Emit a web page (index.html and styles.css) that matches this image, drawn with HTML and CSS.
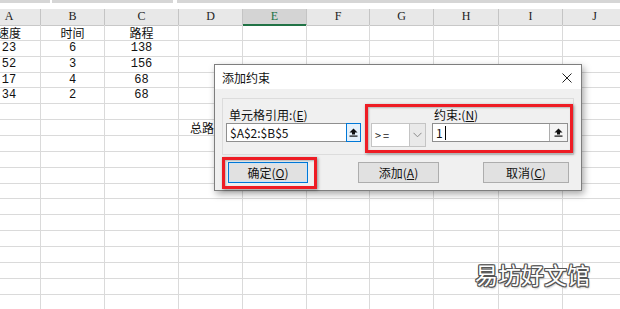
FILE: index.html
```html
<!DOCTYPE html>
<html>
<head>
    <title>添加约束</title>
    <link rel="stylesheet" href="styles.css">
</head>
<body>
    <div class="topbar">
        <span class="seg seg-name"></span>
        <span class="seg seg-fx"></span>
        <span class="seg seg-formula"></span>
    </div>
    <div class="sheet">
        <div class="row head">
            <div class="c">A</div><div class="c">B</div><div class="c">C</div><div class="c">D</div>
            <div class="c sel">E</div><div class="c">F</div><div class="c">G</div><div class="c">H</div>
            <div class="c">I</div><div class="c">J</div>
        </div>
        <div class="row"><div class="c cjk">速度</div><div class="c cjk">时间</div><div class="c cjk">路程</div><div class="c"></div><div class="c"></div><div class="c"></div><div class="c"></div><div class="c"></div><div class="c"></div><div class="c"></div></div>
        <div class="row"><div class="c">23</div><div class="c">6</div><div class="c">138</div><div class="c"></div><div class="c"></div><div class="c"></div><div class="c"></div><div class="c"></div><div class="c"></div><div class="c"></div></div>
        <div class="row"><div class="c">52</div><div class="c">3</div><div class="c">156</div><div class="c"></div><div class="c"></div><div class="c"></div><div class="c"></div><div class="c"></div><div class="c"></div><div class="c"></div></div>
        <div class="row short"><div class="c">17</div><div class="c">4</div><div class="c">68</div><div class="c"></div><div class="c"></div><div class="c"></div><div class="c"></div><div class="c"></div><div class="c"></div><div class="c"></div></div>
        <div class="row"><div class="c">34</div><div class="c">2</div><div class="c">68</div><div class="c"></div><div class="c"></div><div class="c"></div><div class="c"></div><div class="c"></div><div class="c"></div><div class="c"></div></div>
        <div class="row"><div class="c"></div><div class="c"></div><div class="c"></div><div class="c"></div><div class="c"></div><div class="c"></div><div class="c"></div><div class="c"></div><div class="c"></div><div class="c"></div></div>
        <div class="row"><div class="c"></div><div class="c"></div><div class="c"></div><div class="c cjk left">总路程</div><div class="c"></div><div class="c"></div><div class="c"></div><div class="c"></div><div class="c"></div><div class="c"></div></div>
        <div class="row"><div class="c"></div><div class="c"></div><div class="c"></div><div class="c"></div><div class="c"></div><div class="c"></div><div class="c"></div><div class="c"></div><div class="c"></div><div class="c"></div></div>
        <div class="row"><div class="c"></div><div class="c"></div><div class="c"></div><div class="c"></div><div class="c"></div><div class="c"></div><div class="c"></div><div class="c"></div><div class="c"></div><div class="c"></div></div>
        <div class="row"><div class="c"></div><div class="c"></div><div class="c"></div><div class="c"></div><div class="c"></div><div class="c"></div><div class="c"></div><div class="c"></div><div class="c"></div><div class="c"></div></div>
        <div class="row short"><div class="c"></div><div class="c"></div><div class="c"></div><div class="c"></div><div class="c"></div><div class="c"></div><div class="c"></div><div class="c"></div><div class="c"></div><div class="c"></div></div>
        <div class="row"><div class="c"></div><div class="c"></div><div class="c"></div><div class="c"></div><div class="c"></div><div class="c"></div><div class="c"></div><div class="c"></div><div class="c"></div><div class="c"></div></div>
        <div class="row"><div class="c"></div><div class="c"></div><div class="c"></div><div class="c"></div><div class="c"></div><div class="c"></div><div class="c"></div><div class="c"></div><div class="c"></div><div class="c"></div></div>
        <div class="row"><div class="c"></div><div class="c"></div><div class="c"></div><div class="c"></div><div class="c"></div><div class="c"></div><div class="c"></div><div class="c"></div><div class="c"></div><div class="c"></div></div>
        <div class="row"><div class="c"></div><div class="c"></div><div class="c"></div><div class="c"></div><div class="c"></div><div class="c"></div><div class="c"></div><div class="c"></div><div class="c"></div><div class="c"></div></div>
        <div class="row"><div class="c"></div><div class="c"></div><div class="c"></div><div class="c"></div><div class="c"></div><div class="c"></div><div class="c"></div><div class="c"></div><div class="c"></div><div class="c"></div></div>
        <div class="row"><div class="c"></div><div class="c"></div><div class="c"></div><div class="c"></div><div class="c"></div><div class="c"></div><div class="c"></div><div class="c"></div><div class="c"></div><div class="c"></div></div>
        <div class="row"><div class="c"></div><div class="c"></div><div class="c"></div><div class="c"></div><div class="c"></div><div class="c"></div><div class="c"></div><div class="c"></div><div class="c"></div><div class="c"></div></div>
    </div>

    <div class="dialog">
        <div class="titlebar">
            <span>添加约束</span>
            <svg class="close" width="10" height="10" viewBox="0 0 10 10">
                <path d="M0.5 0.5 L9.5 9.5 M9.5 0.5 L0.5 9.5" stroke="#222" stroke-width="1" fill="none"/>
            </svg>
        </div>
        <div class="dlg-body">
            <div class="group">
                <div class="field field-ref">
                    <div class="label">单元格引用:(<u>E</u>)</div>
                    <div class="input input-ref">
                        <span class="value">$A$2:$B$5</span>
                        <span class="pick focus">
                            <svg width="9" height="9" viewBox="0 0 9 9"><path d="M4.5 0.5 L8.5 4.5 H6 V6.5 H3 V4.5 H0.5 Z" fill="#111"/><rect x="0.5" y="7.5" width="8" height="1.2" fill="#111"/></svg>
                        </span>
                    </div>
                </div>
                <div class="combo">
                    <span class="value">&gt;=</span>
                    <span class="drop">
                        <svg width="9" height="6" viewBox="0 0 9 6"><path d="M0.5 0.8 L4.5 4.8 L8.5 0.8" stroke="#8a8a8a" stroke-width="1" fill="none"/></svg>
                    </span>
                </div>
                <div class="field field-val">
                    <div class="label">约束:(<u>N</u>)</div>
                    <div class="input input-val">
                        <span class="value">1<span class="caret"></span></span>
                        <span class="pick">
                            <svg width="9" height="9" viewBox="0 0 9 9"><path d="M4.5 0.5 L8.5 4.5 H6 V6.5 H3 V4.5 H0.5 Z" fill="#111"/><rect x="0.5" y="7.5" width="8" height="1.2" fill="#111"/></svg>
                        </span>
                    </div>
                </div>
            </div>
            <div class="buttons">
                <div class="btn btn-ok">确定(<u>O</u>)</div>
                <div class="btn btn-add">添加(<u>A</u>)</div>
                <div class="btn btn-cancel">取消(<u>C</u>)</div>
            </div>
        </div>
        <div class="mark mark-constraint"></div>
        <div class="mark mark-ok"></div>
    </div>

    <div class="watermark">易坊好文馆</div>
</body>
</html>
```

FILE: styles.css
```css
body {
    margin: 0;
    width: 620px;
    height: 309px;
    overflow: hidden;
    position: relative;
    background: #fff;
    font-family: "Noto Sans CJK SC", sans-serif;
    font-size: 12px;
    color: #000;
}
.topbar {
    height: 3px;
    display: flex;
    border-bottom: 6px solid #fff;
}
.seg {
    height: 3px;
    background: #d6d6d6;
}
.seg-name {
    width: 50px;
}
.seg-fx {
    width: 121px;
    margin-left: 2px;
}
.seg-formula {
    flex: 1;
    margin-left: 4px;
}
.sheet {
    margin-left: -22px;
}
.row {
    display: grid;
    grid-template-columns: 63px 64px 74px 64px 64px 63px 64px 65px 64px 64px;
    height: 16px;
}
.row.short {
    height: 15px;
}
.c {
    box-sizing: border-box;
    border-right: 1px solid #dadada;
    border-bottom: 1px solid #dadada;
    text-align: center;
    font-family: "Liberation Mono", monospace;
    font-size: 12px;
    line-height: 15px;
    white-space: nowrap;
    color: #111;
}
.row.short .c {
    line-height: 14px;
}
.c.cjk {
    font-family: "Noto Sans CJK SC", sans-serif;
    font-size: 12px;
}
.c.left {
    text-align: left;
    padding-left: 11px;
}
.head .c {
    background: #e8e8e8;
    border-right-color: #c4c4c4;
    border-bottom-color: #c8c8c8;
    font-family: "Liberation Serif", serif;
    font-size: 12px;
    color: #222;
}
.head .c.sel {
    background: #d4d4d4;
    border-bottom: 2px solid #217346;
    color: #217346;
}

/* dialog */
.dialog {
    position: absolute;
    left: 214px;
    top: 64px;
    width: 368px;
    height: 127px;
    box-sizing: border-box;
    border: 1px solid #7e7e7e;
    background: #f0f0f0;
    box-shadow: 2px 3px 7px rgba(0, 0, 0, 0.35);
}
.titlebar {
    height: 24px;
    background: #fff;
    display: flex;
    align-items: center;
    justify-content: space-between;
    padding: 0 9px 0 7px;
    font-size: 12px;
    color: #111;
}
.close {
    margin-top: 1px;
}
.dlg-body {
    padding: 9px 7px 0 7px;
}
.group {
    height: 57px;
    box-sizing: border-box;
    border: 1px solid #dcdcdc;
    display: flex;
    align-items: flex-start;
    padding: 9px 0 0 3px;
}
.label {
    height: 14px;
    line-height: 14px;
    margin-bottom: 1px;
    padding-left: 3px;
    color: #111;
}
.field-val .label {
    padding-left: 2px;
}
.input {
    height: 19px;
    box-sizing: border-box;
    border: 1px solid #8f8f8f;
    background: #fff;
    display: flex;
    align-items: stretch;
}
.input-ref {
    width: 135px;
}
.input-val {
    width: 136px;
}
.input .value {
    flex: 1;
    padding-left: 3px;
    line-height: 17px;
    font-size: 12px;
    color: #111;
    display: flex;
    align-items: center;
}
.caret {
    display: inline-block;
    width: 1px;
    height: 14px;
    background: #000;
    margin-left: 2px;
}
.pick {
    width: 16px;
    box-sizing: border-box;
    border-left: 1px solid #adadad;
    background: #f3f3f3;
    display: flex;
    align-items: center;
    justify-content: center;
}
.pick.focus {
    width: 15px;
    border: 1px solid #0078d7;
    background: #e5f1fb;
    margin: -1px -1px -1px 0;
}
.input-val .pick {
    width: 18px;
}
.combo {
    margin: 15px 0 0 10px;
    width: 55px;
    height: 24px;
    box-sizing: border-box;
    border: 1px solid #c4c4c4;
    background: #fff;
    display: flex;
}
.combo .value {
    flex: 1;
    padding-left: 3px;
    line-height: 22px;
    letter-spacing: 2px;
    font-size: 11px;
    color: #222;
}
.drop {
    width: 15px;
    border-left: 1px solid #c4c4c4;
    background: #e9e9e9;
    display: flex;
    align-items: center;
    justify-content: center;
}
.field-val {
    margin-left: 6px;
}
.buttons {
    display: flex;
    margin: 7px 0 0 6px;
}
.btn {
    height: 21px;
    box-sizing: border-box;
    border: 1px solid #adadad;
    background: #e1e1e1;
    text-align: center;
    line-height: 19px;
    color: #111;
}
.btn-ok {
    width: 80px;
    border-color: #0078d7;
    box-shadow: inset 0 0 0 1px #cfe3f5;
}
.btn-add {
    width: 81px;
    margin-left: 50px;
}
.btn-cancel {
    width: 86px;
    margin-left: 44px;
}
u {
    text-decoration: underline;
    text-underline-offset: 1px;
}

/* red highlight frames over the dialog */
.mark {
    position: absolute;
    box-sizing: border-box;
    border: 3px solid #ee1c24;
    box-shadow: 1px 1px 3px rgba(0, 0, 0, 0.4), inset 1px 1px 2px rgba(0, 0, 0, 0.25);
}
.mark-constraint {
    left: 150px;
    top: 39px;
    width: 208px;
    height: 49px;
}
.mark-ok {
    left: 7px;
    top: 92px;
    width: 95px;
    height: 32px;
}

.watermark {
    position: absolute;
    left: 475px;
    top: 259px;
    font-size: 23px;
    line-height: 30px;
    color: #fff;
    letter-spacing: 0;
    text-shadow:
        1px 0 0 #555, -1px 0 0 #555, 0 1px 0 #555, 0 -1px 0 #555,
        1px 1px 0 #555, -1px -1px 0 #555, 1px -1px 0 #555, -1px 1px 0 #555,
        1px 2px 2px rgba(0, 0, 0, 0.3);
}
```
